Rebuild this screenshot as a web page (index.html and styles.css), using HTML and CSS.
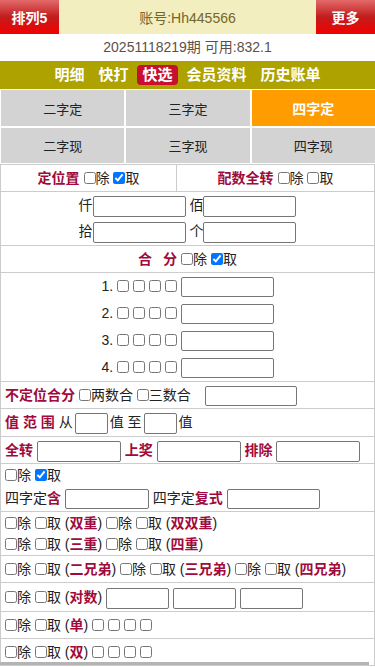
FILE: index.html
```html
<!DOCTYPE html>
<html lang="zh-CN">
<head>
<meta charset="utf-8">
<meta name="viewport" content="width=device-width, initial-scale=1">
<title>快选</title>
<link rel="stylesheet" href="styles.css">
</head>
<body>
<div class="top">
  <div class="tbtn">排列5</div>
  <div class="acct">账号:Hh445566</div>
  <div class="tbtn">更多</div>
</div>
<div class="info">20251118219期 可用:832.1</div>
<nav class="nav">
  <a>明细</a><a>快打</a><a class="on">快选</a><a>会员资料</a><a>历史账单</a>
</nav>
<div class="tabs">
  <div class="tab">二字定</div>
  <div class="tab">三字定</div>
  <div class="tab on">四字定</div>
  <div class="tab">二字现</div>
  <div class="tab">三字现</div>
  <div class="tab">四字现</div>
</div>
<div class="panel">
  <div class="row split">
    <div class="cell c1"><b class="k">定位置</b> <input type="checkbox" class="cb">除 <input type="checkbox" class="cb" checked>取</div>
    <div class="cell c2"><b class="k">配数全转</b> <input type="checkbox" class="cb">除 <input type="checkbox" class="cb">取</div>
  </div>
  <div class="row r-pos">
    <div class="ln center">仟<input class="inp w93"> 佰<input class="inp w93"></div>
    <div class="ln center">拾<input class="inp w93"> 个<input class="inp w93"></div>
  </div>
  <div class="row">
    <div class="ln center"><b class="k">合<i class="sp"></i>分</b> <input type="checkbox" class="cb">除 <input type="checkbox" class="cb" checked>取</div>
  </div>
  <div class="row">
    <div class="ln l27 center">1. <input type="checkbox" class="cb"> <input type="checkbox" class="cb"> <input type="checkbox" class="cb"> <input type="checkbox" class="cb"> <input class="inp w93 h20"></div>
    <div class="ln l27 center">2. <input type="checkbox" class="cb"> <input type="checkbox" class="cb"> <input type="checkbox" class="cb"> <input type="checkbox" class="cb"> <input class="inp w93 h20"></div>
    <div class="ln l27 center">3. <input type="checkbox" class="cb"> <input type="checkbox" class="cb"> <input type="checkbox" class="cb"> <input type="checkbox" class="cb"> <input class="inp w93 h20"></div>
    <div class="ln l27 center">4. <input type="checkbox" class="cb"> <input type="checkbox" class="cb"> <input type="checkbox" class="cb"> <input type="checkbox" class="cb"> <input class="inp w93 h20"></div>
  </div>
  <div class="row">
    <div class="ln"><b class="k">不定位合分</b> <input type="checkbox" class="cb">两数合 <input type="checkbox" class="cb">三数合 <input class="inp w92 h20 gapl"></div>
  </div>
  <div class="row">
    <div class="ln l27"><b class="k">值 范 围</b> 从<input class="inp w33 mx">值 至<input class="inp w33 mx">值</div>
  </div>
  <div class="row">
    <div class="ln"><b class="k">全转</b> <input class="inp w84"> <b class="k">上奖</b> <input class="inp w84"> <b class="k">排除</b> <input class="inp w84"></div>
  </div>
  <div class="row r-inc">
    <div class="ln l22"><input type="checkbox" class="cb">除 <input type="checkbox" class="cb" checked>取</div>
    <div class="ln l24">四字定<b class="k">含</b> <input class="inp w84 h20"> 四字定<b class="k">复式</b> <input class="inp w93 h20"></div>
  </div>
  <div class="row r-dbl">
    <div class="ln l21"><input type="checkbox" class="cb">除 <input type="checkbox" class="cb">取 (<b class="k">双重</b>) <input type="checkbox" class="cb">除 <input type="checkbox" class="cb">取 (<b class="k">双双重</b>)</div>
    <div class="ln l21"><input type="checkbox" class="cb">除 <input type="checkbox" class="cb">取 (<b class="k">三重</b>) <input type="checkbox" class="cb">除 <input type="checkbox" class="cb">取 (<b class="k">四重</b>)</div>
  </div>
  <div class="row">
    <div class="ln"><input type="checkbox" class="cb">除 <input type="checkbox" class="cb">取 (<b class="k">二兄弟</b>) <input type="checkbox" class="cb">除 <input type="checkbox" class="cb">取 (<b class="k">三兄弟</b>) <input type="checkbox" class="cb">除 <input type="checkbox" class="cb">取 (<b class="k">四兄弟</b>)</div>
  </div>
  <div class="row">
    <div class="ln l28"><input type="checkbox" class="cb">除 <input type="checkbox" class="cb">取 (<b class="k">对数</b>) <input class="inp w63"> <input class="inp w63"> <input class="inp w63"></div>
  </div>
  <div class="row">
    <div class="ln"><input type="checkbox" class="cb">除 <input type="checkbox" class="cb">取 (<b class="k">单</b>) <input type="checkbox" class="cb"> <input type="checkbox" class="cb"> <input type="checkbox" class="cb"> <input type="checkbox" class="cb"></div>
  </div>
  <div class="row">
    <div class="ln"><input type="checkbox" class="cb">除 <input type="checkbox" class="cb">取 (<b class="k">双</b>) <input type="checkbox" class="cb"> <input type="checkbox" class="cb"> <input type="checkbox" class="cb"> <input type="checkbox" class="cb"></div>
  </div>
</div>
<div class="hscroll"></div>
</body>
</html>
```

FILE: styles.css
```css
* { box-sizing: border-box; }
html, body { margin: 0; padding: 0; }
body {
  font-family: "Liberation Sans", "Noto Sans CJK SC", sans-serif;
  font-size: 14px;
  color: #222;
  background: #fff;
}
.top { display: flex; height: 34px; }
.tbtn {
  width: 59px;
  display: flex;
  align-items: center;
  justify-content: center;
  color: #fff;
  font-weight: bold;
  background: linear-gradient(#e26a6a 0%, #c21c1c 50%, #f20000 100%);
}
.acct {
  flex: 1;
  display: flex;
  align-items: center;
  justify-content: center;
  background: #f2eebf;
  color: #75662b;
}
.info {
  height: 27px;
  line-height: 27px;
  text-align: center;
  color: #5e5046;
}
.nav {
  height: 28px;
  background: #ada200;
  display: flex;
  justify-content: center;
  align-items: center;
  gap: 4px;
}
.nav a {
  color: #fff;
  font-weight: bold;
  font-size: 15px;
  padding: 0 5px;
  height: 20px;
  line-height: 20px;
  border-radius: 4px;
}
.nav a.on { background: #c8102e; }
.tabs {
  display: grid;
  grid-template-columns: repeat(3, 1fr);
  grid-template-rows: 36px 35px;
  gap: 2px;
  padding-left: 1px;
  margin-top: 1px;
}
.tab {
  background: #d3d3d3;
  display: flex;
  align-items: center;
  justify-content: center;
  font-size: 13px;
  color: #222;
}
.tab.on {
  background: #ff9c00;
  color: #fff;
  font-weight: bold;
  font-size: 14px;
}
.panel {
  margin-top: 1px;
  border-top: 1px solid #ccc;
  border-left: 1px solid #ccc;
  border-right: 1px solid #ccc;
}
.row {
  border-bottom: 1px solid #ccc;
  padding: 0 4px;
}
.ln {
  height: 26px;
  line-height: 26px;
  white-space: nowrap;
}
.l21 { height: 21px; line-height: 21px; }
.l22 { height: 22px; line-height: 22px; }
.l24 { height: 24px; line-height: 24px; }
.l27 { height: 27px; line-height: 27px; }
.l28 { height: 28px; line-height: 28px; }
.center { text-align: center; }
.r-pos { padding-bottom: 1px; }
.r-inc { padding-bottom: 1px; }
.r-dbl { padding-top: 1px; }
.split { display: flex; padding: 0; }
.cell {
  height: 26px;
  line-height: 26px;
  text-align: center;
  white-space: nowrap;
}
.c1 { width: 176px; border-right: 1px solid #ccc; }
.c2 { flex: 1; }
.k { color: #a00a3c; font-weight: bold; }
.sp { display: inline-block; width: 11px; }
.cb {
  width: 12px;
  height: 12px;
  margin: 0;
  vertical-align: middle;
  position: relative;
  top: -1px;
}
.inp {
  height: 21px;
  border: 1px solid #767676;
  border-radius: 2px;
  padding: 1px 2px;
  font: inherit;
  background: #fff;
  vertical-align: middle;
  margin: 0;
}
.h20 { height: 20px; }
.w93 { width: 93px; }
.w92 { width: 92px; }
.w84 { width: 84px; }
.w63 { width: 63px; }
.w33 { width: 33px; }
.mx { margin: 0 2px; }
.gapl { margin-left: 10px; }
.hscroll {
  position: fixed;
  left: 0;
  bottom: 2px;
  width: 369px;
  height: 3px;
  background: #b4b4b4;
}
```
